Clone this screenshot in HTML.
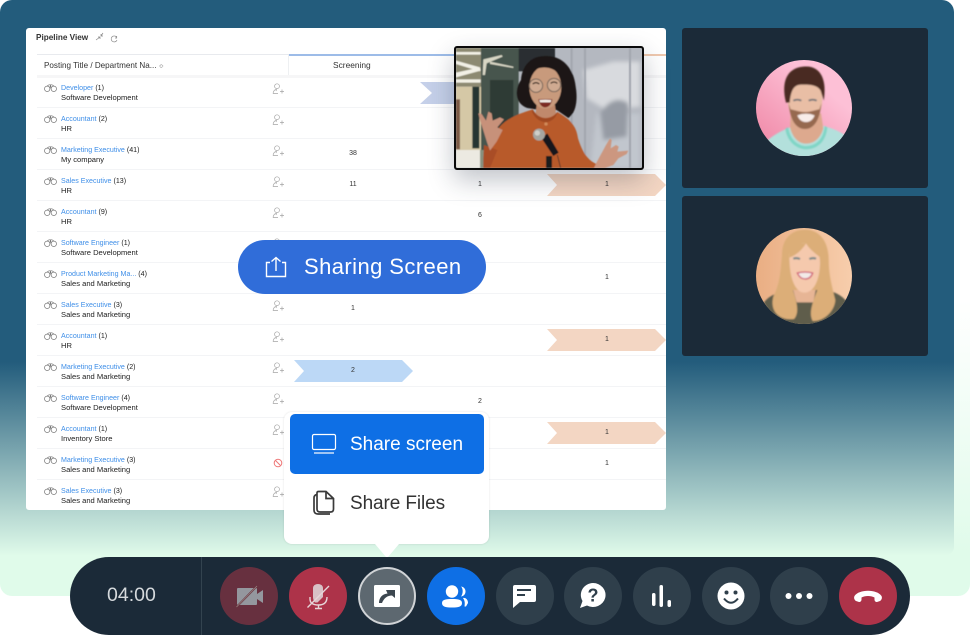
<!DOCTYPE html>
<html><head><meta charset="utf-8"><style>
html,body{margin:0;padding:0;background:#fff}
#p{position:relative;width:970px;height:635px;overflow:hidden;background:#fff;font-family:"Liberation Sans",sans-serif}
#p div{position:absolute}
.mint{left:0;top:0;width:970px;height:596px;border-radius:0 12px 12px 12px;background:linear-gradient(#fff 0,#fff 300px,#e0fbea 555px,#e0fbea 596px)}
.bg{left:0;top:0;width:954px;height:555px;border-radius:12px 12px 8px 0;background:linear-gradient(#235c7c 0,#235c7c 362px,#e0fbea 556px)}
.card{left:26px;top:28px;width:640px;height:482px;background:#fff;border-radius:3px}
.t{font-size:7.6px;line-height:10px;white-space:nowrap;color:#222}
.a{font-size:7.1px}
.l{color:#3f8fe8}
.n{font-size:7px;line-height:10px;color:#333;width:30px;text-align:center}
.ln{left:37px;width:629px;height:1px;background:#f3f4f6}
.pn{left:682px;width:246px;background:#1b2a38;border-radius:3px}
.b{width:58px;height:58px;border-radius:50%;top:567px;background:#2f3f4b}
svg{position:absolute;display:block}
</style></head><body><div id="p">
<div class="mint"></div><div class="bg"></div>
<div class="pn" style="top:28px;height:160px"></div>
<div class="pn" style="top:196px;height:160px"></div>
<div class="card"></div>

<div class="t" style="left:36px;top:33px;font-weight:bold;font-size:8.2px;color:#333">Pipeline View</div>
<svg style="left:95px;top:32px" width="26" height="12" viewBox="0 0 26 12" fill="none" stroke="#888" stroke-width=".7"><path d="M1 8L5 5M3 5H5V7M8 1L6 4M6 2V4H8"/><path d="M21.500 5A3 3 0 1 0 22 8M21.700 4V6H20"/></svg>

<div style="left:37px;top:54px;width:629px;height:1px;background:#e8eaee"></div>
<div style="left:37px;top:75px;width:629px;height:3px;background:#f6f6f7"></div>
<div style="left:288px;top:55px;width:1px;height:20px;background:#eef0f2"></div>
<div style="left:289px;top:54px;width:166px;height:2px;background:#9dbce8"></div>
<div style="left:644px;top:54px;width:22px;height:2px;background:#efc8ae"></div>
<div class="t" style="left:44px;top:60px;font-size:8.1px;line-height:11px;color:#333">Posting Title / Department Na... <span style="color:#999;font-size:6px">≎</span></div>
<div class="t" style="left:333px;top:60px;font-size:8.4px;line-height:11px;color:#333">Screening</div>

<div class="ln" style="top:107px"></div><div class="ln" style="top:138px"></div><div class="ln" style="top:169px"></div><div class="ln" style="top:200px"></div><div class="ln" style="top:231px"></div><div class="ln" style="top:262px"></div><div class="ln" style="top:293px"></div><div class="ln" style="top:324px"></div><div class="ln" style="top:355px"></div><div class="ln" style="top:386px"></div><div class="ln" style="top:417px"></div><div class="ln" style="top:448px"></div><div class="ln" style="top:479px"></div>

<svg width="0" height="0"><defs>
<symbol id="bi" viewBox="0 0 13 8"><g fill="none" stroke="#777" stroke-width=".7"><circle cx="3.200" cy="4.800" r="2.700"/><circle cx="9.800" cy="4.800" r="2.700"/><path d="M3 2L5 .8H8L10 2M5.800 4.500L6.500 1L7.200 4.500"/></g></symbol>
<symbol id="us" viewBox="0 0 12 12"><g fill="none" stroke="#a5a5a5" stroke-width=".7"><circle cx="5" cy="3.200" r="2.400"/><path d="M1 10.500C1.500 7.500 3 6.500 4.500 6.500L4 8M1 10.500H6M8 8.500H12M10 6.500V10.500"/></g></symbol>
</defs></svg>

<svg style="left:44px;top:84px" width="13" height="8"><use href="#bi"/></svg><svg style="left:272px;top:83px" width="12" height="12"><use href="#us"/></svg>
<div class="t a" style="left:61px;top:83px"><span class="l">Developer</span> (1)</div><div class="t" style="left:61px;top:93px">Software Development</div>

<svg style="left:44px;top:115px" width="13" height="8"><use href="#bi"/></svg><svg style="left:272px;top:114px" width="12" height="12"><use href="#us"/></svg>
<div class="t a" style="left:61px;top:114px"><span class="l">Accountant</span> (2)</div><div class="t" style="left:61px;top:124px">HR</div>

<svg style="left:44px;top:146px" width="13" height="8"><use href="#bi"/></svg><svg style="left:272px;top:145px" width="12" height="12"><use href="#us"/></svg>
<div class="t a" style="left:61px;top:145px"><span class="l">Marketing Executive</span> (41)</div><div class="t" style="left:61px;top:155px">My company</div>

<svg style="left:44px;top:177px" width="13" height="8"><use href="#bi"/></svg><svg style="left:272px;top:176px" width="12" height="12"><use href="#us"/></svg>
<div class="t a" style="left:61px;top:176px"><span class="l">Sales Executive</span> (13)</div><div class="t" style="left:61px;top:186px">HR</div>

<svg style="left:44px;top:208px" width="13" height="8"><use href="#bi"/></svg><svg style="left:272px;top:207px" width="12" height="12"><use href="#us"/></svg>
<div class="t a" style="left:61px;top:207px"><span class="l">Accountant</span> (9)</div><div class="t" style="left:61px;top:217px">HR</div>

<svg style="left:44px;top:239px" width="13" height="8"><use href="#bi"/></svg><svg style="left:272px;top:238px" width="12" height="12"><use href="#us"/></svg>
<div class="t a" style="left:61px;top:238px"><span class="l">Software Engineer</span> (1)</div><div class="t" style="left:61px;top:248px">Software Development</div>

<svg style="left:44px;top:270px" width="13" height="8"><use href="#bi"/></svg><svg style="left:272px;top:269px" width="12" height="12"><use href="#us"/></svg>
<div class="t a" style="left:61px;top:269px"><span class="l">Product Marketing Ma...</span> (4)</div><div class="t" style="left:61px;top:279px">Sales and Marketing</div>

<svg style="left:44px;top:301px" width="13" height="8"><use href="#bi"/></svg><svg style="left:272px;top:300px" width="12" height="12"><use href="#us"/></svg>
<div class="t a" style="left:61px;top:300px"><span class="l">Sales Executive</span> (3)</div><div class="t" style="left:61px;top:310px">Sales and Marketing</div>

<svg style="left:44px;top:332px" width="13" height="8"><use href="#bi"/></svg><svg style="left:272px;top:331px" width="12" height="12"><use href="#us"/></svg>
<div class="t a" style="left:61px;top:331px"><span class="l">Accountant</span> (1)</div><div class="t" style="left:61px;top:341px">HR</div>

<svg style="left:44px;top:363px" width="13" height="8"><use href="#bi"/></svg><svg style="left:272px;top:362px" width="12" height="12"><use href="#us"/></svg>
<div class="t a" style="left:61px;top:362px"><span class="l">Marketing Executive</span> (2)</div><div class="t" style="left:61px;top:372px">Sales and Marketing</div>

<svg style="left:44px;top:394px" width="13" height="8"><use href="#bi"/></svg><svg style="left:272px;top:393px" width="12" height="12"><use href="#us"/></svg>
<div class="t a" style="left:61px;top:393px"><span class="l">Software Engineer</span> (4)</div><div class="t" style="left:61px;top:403px">Software Development</div>

<svg style="left:44px;top:425px" width="13" height="8"><use href="#bi"/></svg><svg style="left:272px;top:424px" width="12" height="12"><use href="#us"/></svg>
<div class="t a" style="left:61px;top:424px"><span class="l">Accountant</span> (1)</div><div class="t" style="left:61px;top:434px">Inventory Store</div>

<svg style="left:44px;top:456px" width="13" height="8"><use href="#bi"/></svg>
<svg style="left:273px;top:458px" width="10" height="10" viewBox="0 0 10 10" fill="none" stroke="#e77" stroke-width="1"><circle cx="5" cy="5" r="3.800"/><path d="M2.400 2.400L7.600 7.600"/></svg>
<div class="t a" style="left:61px;top:455px"><span class="l">Marketing Executive</span> (3)</div><div class="t" style="left:61px;top:465px">Sales and Marketing</div>

<svg style="left:44px;top:487px" width="13" height="8"><use href="#bi"/></svg><svg style="left:272px;top:486px" width="12" height="12"><use href="#us"/></svg>
<div class="t a" style="left:61px;top:486px"><span class="l">Sales Executive</span> (3)</div><div class="t" style="left:61px;top:496px">Sales and Marketing</div>

<svg style="left:420px;top:82px" width="40" height="22"><path d="M0 0H40V22H0L12 11z" fill="#c5d0e9"/></svg>
<svg style="left:547px;top:174px" width="119" height="22"><path d="M0 0H108L119 11L108 22H0L10 11z" fill="#f3d6c3"/></svg>
<svg style="left:547px;top:329px" width="119" height="22"><path d="M0 0H108L119 11L108 22H0L10 11z" fill="#f3d6c3"/></svg>
<svg style="left:547px;top:422px" width="119" height="22"><path d="M0 0H108L119 11L108 22H0L10 11z" fill="#f3d6c3"/></svg>
<svg style="left:294px;top:360px" width="119" height="22"><path d="M0 0H108L119 11L108 22H0L10 11z" fill="#bcd8f6"/></svg>

<div class="n" style="left:338px;top:149px">38</div>
<div class="n" style="left:338px;top:180px">11</div>
<div class="n" style="left:465px;top:180px">1</div>
<div class="n" style="left:592px;top:180px">1</div>
<div class="n" style="left:465px;top:211px">6</div>
<div class="n" style="left:592px;top:273px">1</div>
<div class="n" style="left:338px;top:304px">1</div>
<div class="n" style="left:592px;top:335px">1</div>
<div class="n" style="left:338px;top:366px">2</div>
<div class="n" style="left:465px;top:397px">2</div>
<div class="n" style="left:592px;top:428px">1</div>
<div class="n" style="left:592px;top:459px">1</div>

<!-- video -->
<div style="left:454px;top:46px;width:186px;height:120px;border:2px solid #0a0a0a;border-radius:3px;overflow:hidden;box-shadow:0 10px 26px rgba(30,40,60,.28);background:#999"></div>
<svg style="left:456px;top:48px;border-radius:2px" width="186" height="120" viewBox="48 54 558 360">
<defs><filter id="sf"><feGaussianBlur stdDeviation="1.600"/></filter><filter id="sf2"><feGaussianBlur stdDeviation="6"/></filter><filter id="sf3"><feGaussianBlur stdDeviation="2.500"/></filter><clipPath id="cm"><circle cx="192" cy="174" r="144"/></clipPath><clipPath id="cw"><circle cx="192" cy="183" r="144"/></clipPath>
<linearGradient id="gm" x1="1" y1="0" x2="0" y2="1"><stop offset=".35" stop-color="#fdc0d6"/><stop offset=".85" stop-color="#f08aa8"/></linearGradient>
<linearGradient id="gw" x1="0" y1="0" x2="1" y2="0"><stop offset=".1" stop-color="#e9ad82"/><stop offset=".9" stop-color="#f8cfae"/></linearGradient></defs>
<rect x="48" y="54" width="558" height="360" fill="#b4b8c0"/>
<g filter="url(#sf2)"><path d="M430 120L520 95 600 95V230L500 240 440 205z" fill="#d8dade"/><path d="M470 250H600V414H450z" fill="#c1c6cd"/><path d="M480 250Q520 190 565 220L560 320 490 330z" fill="#969ba4"/></g>
<g filter="url(#sf)">
<path d="M395 54V414M435 54V414M570 54V414" stroke="#a2a6ae" stroke-width="6" fill="none"/>
<rect x="235" y="54" width="110" height="70" fill="#2b2d31"/>
<rect x="118" y="54" width="118" height="360" fill="#47544d"/>
<rect x="150" y="150" width="70" height="200" fill="#2e3b36"/>
<rect x="48" y="54" width="75" height="116" fill="#8d8a72"/>
<path d="M48 66H122V74H48zM48 92L120 112V124L48 102zM48 128L120 112 122 122 48 142zM48 148H122V158H48z" fill="#f2f0e6"/>
<path d="M130 88L185 75 188 80 140 100 135 135 128 135zM150 95L220 110 220 114 150 102z" fill="#d8d6c4"/>
<rect x="48" y="170" width="75" height="190" fill="#d5c8a6"/>
<rect x="48" y="208" width="12" height="150" fill="#7c5a45"/>
<rect x="97" y="170" width="21" height="185" fill="#273631"/>
<rect x="48" y="360" width="75" height="54" fill="#eceae2"/>
<rect x="120" y="360" width="15" height="54" fill="#87917f"/>
<path d="M320 78C270 76 246 110 243 150C222 180 226 222 262 234L300 240H350L385 264C408 250 414 210 407 170C402 115 367 78 320 78z" fill="#1c1818"/>
<path d="M290 225H345L352 285H282z" fill="#c0896c"/>
<ellipse cx="316" cy="172" rx="48" ry="64" fill="#c89a7c"/>
<path d="M270 130C290 105 345 105 362 140L372 120 330 95 280 105z" fill="#1c1818"/>
<circle cx="288" cy="167" r="20" fill="#d6b9a5" fill-opacity=".5" stroke="#77665a" stroke-width="3"/>
<circle cx="342" cy="165" r="20" fill="#d6b9a5" fill-opacity=".5" stroke="#77665a" stroke-width="3"/>
<path d="M278 162Q288 154 298 162M332 160Q342 152 352 160" stroke="#3a2a22" stroke-width="4" fill="none"/>
<path d="M295 208Q316 206 337 208Q332 232 314 232Q300 230 295 208z" fill="#7c2a20"/>
<path d="M298 210Q316 208 334 210L332 217H300z" fill="#f3efe9"/>
<path d="M130 414C132 370 150 335 172 300C195 265 240 250 278 238C295 270 330 272 352 246C390 268 408 285 414 325C425 360 440 390 470 402L462 414z" fill="#b85a2c"/>
<path d="M278 238C296 272 335 272 352 246L350 254C335 285 295 285 276 246z" fill="#a04a22"/>
<path d="M130 385L132 345 172 360 150 414H130z" fill="#a94e26"/>
<circle cx="318" cy="282" r="5" fill="#d08a58"/>
<path d="M142 340L120 270 115 250 125 252 138 272 145 245 155 250 158 272 180 262 192 268 172 292 188 300 170 335 150 362z" fill="#c7917a"/>
<path d="M462 414C470 395 485 370 498 345L510 325 515 330 512 355 528 345 536 350 532 365 565 362 560 372 535 385 520 405 495 414z" fill="#cc9780"/>
<path d="M352 375L362 414" stroke="#2a2a2a" stroke-width="2"/>
<rect x="318" y="378" width="18" height="36" fill="#1a1a1a"/>
<path d="M305 325L340 378 356 368 322 310z" fill="#15171a"/>
<circle cx="297" cy="314" r="18" fill="#a5a5a0"/><circle cx="292" cy="309" r="8" fill="#cfcfca"/>
</g>
</svg>

<!-- man -->
<svg style="left:740px;top:50px" width="130" height="110" viewBox="0 0 390 330"><g clip-path="url(#cm)"><rect width="390" height="330" fill="url(#gm)"/><g filter="url(#sf3)">
<path d="M72 280C105 250 130 240 150 232L250 228C280 235 300 245 325 262V330H72z" fill="#b3e0dc"/>
<path d="M145 232C150 272 178 288 198 288C228 288 250 268 254 228L262 232C258 278 228 298 198 298C168 298 140 272 136 236z" fill="#80d6c6"/>
<path d="M152 190H243L250 235C240 272 215 281 198 281C175 281 157 262 150 232z" fill="#dda98e"/>
<ellipse cx="195" cy="148" rx="52" ry="76" fill="#e9bea5"/>
<path d="M146 160C150 208 167 237 195 237C223 237 240 208 244 160L238 178C224 180 212 186 195 186C178 186 166 180 152 178z" fill="#96694f"/>
<path d="M172 196Q198 186 224 196Q216 216 198 216Q180 216 172 196z" fill="#f8ece9"/>
<path d="M138 158C122 92 143 54 190 50C242 44 262 90 251 152L242 122C232 105 210 104 190 104C170 104 154 106 149 158z" fill="#4a2a21"/>
<path d="M160 152Q172 146 184 152M206 152Q218 146 230 152" stroke="#5f6a72" stroke-width="5" fill="none"/>
</g></g></svg>

<!-- woman -->
<svg style="left:740px;top:215px" width="130" height="120" viewBox="0 0 390 360"><g clip-path="url(#cw)"><rect width="390" height="360" fill="url(#gw)"/><g filter="url(#sf3)">
<path d="M72 262C90 238 120 230 150 226L250 224C280 228 305 240 320 260L280 335H110z" fill="#5f5d4b"/>
<path d="M155 210L230 210 220 262H170z" fill="#e7b595"/>
<path d="M126 120C126 66 160 44 195 44C239 44 266 80 266 135C266 180 276 215 286 255C284 290 250 320 218 318C205 295 218 262 232 225L158 225C172 262 178 295 162 312C122 318 88 292 100 245C120 205 122 165 126 120z" fill="#dcae78"/>
<path d="M148 122C148 92 175 82 195 85C226 86 242 110 240 150C237 205 217 233 193 233C170 233 148 200 148 122z" fill="#f5c9ad"/>
<path d="M148 128C165 122 185 107 198 85L150 82zM198 85C210 105 230 118 242 128L236 82z" fill="#dcae78"/>
<path d="M172 174Q195 168 218 174Q212 192 195 192Q180 192 172 174z" fill="#f2ebe8" stroke="#cf5a72" stroke-width="4"/>
<path d="M160 131Q170 127 180 132M208 132Q218 127 228 131" stroke="#6f8487" stroke-width="6" fill="none"/>
</g></g></svg>

<!-- pill -->
<div style="left:238px;top:240px;width:248px;height:54px;border-radius:27px;background:#306dd9"></div>
<svg style="left:262px;top:254px" width="28" height="26" viewBox="0 0 28 26" fill="none" stroke="#fff" stroke-width="1.400"><path d="M8 8.500H4.500V22.500H23.500V8.500H20M14 17V3.500M9.500 7.500L14 3.500L18.500 7.500"/></svg>
<div class="t" style="left:304px;top:253px;font-size:22px;line-height:28px;color:#fff;letter-spacing:.42px">Sharing Screen</div>

<!-- popup -->
<div style="left:284px;top:412px;width:205px;height:132px;background:#fff;border-radius:8px;box-shadow:0 0 2px rgba(0,0,0,.12)"></div>
<div style="left:290px;top:414px;width:194px;height:60px;background:#0e6fe5;border-radius:5px"></div>
<svg style="left:310px;top:432px" width="28" height="24" viewBox="0 0 28 24" fill="none" stroke="#fff" stroke-width="1.200"><rect x="2.500" y="2.500" width="23" height="15" rx="1.500"/><path d="M4 21H24" stroke="#cfe2fa" stroke-width="1.500"/></svg>
<div class="t" style="left:350px;top:431px;font-size:19px;line-height:28px;color:#fff">Share screen</div>
<svg style="left:311px;top:489px" width="26" height="28" viewBox="0 0 26 28" fill="none" stroke="#3a3a3a" stroke-width="1.700"><path d="M7.500 2.500H15L22.500 9.500V20Q22.500 23 19.500 23H9Q6 23 6 20V4Q6 2.500 7.500 2.500zM15 3V9.500H22"/><path d="M6 5.500Q3 6 3 9V21Q3 25 7 25H19"/></svg>
<div class="t" style="left:350px;top:490px;font-size:19px;line-height:28px;color:#333;letter-spacing:-.1px">Share Files</div>
<svg style="left:375px;top:543px" width="24" height="15"><path d="M0 1H24L13 14H11z" fill="#fff"/></svg>

<!-- bar -->
<div style="left:70px;top:557px;width:840px;height:78px;border-radius:39px;background:#1b2a38"></div>
<div style="left:201px;top:557px;width:1px;height:78px;background:#33434f"></div>
<div class="t" style="left:107px;top:582px;font-size:19.5px;line-height:26px;color:#d5d9dc">04:00</div>

<div class="b" style="left:220px;background:#67303f"></div>
<svg style="left:235px;top:583px" width="30" height="26" viewBox="0 0 30 26"><rect x="2" y="5" width="20" height="17" rx="1" fill="#94979e"/><path d="M22 11L28 7V20L22 16z" fill="#94979e"/><path d="M1.500 24L22 3" stroke="#67303f" stroke-width="1.800"/><path d="M1.500 24L22 3" stroke="#9a8a84" stroke-width=".7"/></svg>

<div class="b" style="left:289px;background:#ad3349"></div>
<svg style="left:306px;top:582px" width="26" height="30" viewBox="0 0 26 30" fill="none" stroke="#e6d5d8" stroke-width="1.400"><path d="M7 6A5 4 0 0 1 17 6V15L11.500 20.500H9Q7 18 7 15z" fill="#d8c0c5" stroke="none"/><path d="M4 15V17Q4 23 12.500 23Q21 23 21 15M12.500 23V26M9 26.500H16M1.500 25.500L23 4"/></svg>

<div class="b" style="left:358px;background:#5d6870;width:54px;height:54px;border:2px solid #d0d3d6"></div>
<svg style="left:373px;top:584px" width="28" height="24" viewBox="0 0 28 24"><rect x="1" y="1" width="26" height="22" rx="1.500" fill="#fff"/><path d="M6 19C6 13.500 9.500 10 14.500 9.500L13 6H22V14L19 11.500C14.500 11.500 11 14 9 19z" fill="#3d4750"/></svg>

<div class="b" style="left:427px;background:#0e6fe5"></div>
<svg style="left:440px;top:582px" width="30" height="28" viewBox="0 0 30 28" fill="#fff"><circle cx="12" cy="9.500" r="6.200"/><path d="M2 21C2 17.500 6 17 12 17C18 17 22 17.500 22 21C22 25 18 25.500 12 25.500C6 25.500 2 25 2 21z"/><path d="M21 4.500C24 5 25.500 7 25.500 9.500C25.500 12 24 14 21 14.500C23 12 23.500 7 21 4.500zM23 16C26 15.500 28 18 28 21L26 24.500H24.500C25 21 25 19 23 16z"/></svg>

<div class="b" style="left:496px"></div>
<svg style="left:512px;top:584px" width="25" height="25" viewBox="0 0 25 25"><path d="M3 1H22Q24 1 24 3V16Q24 18 22 18H8L1 24V3Q1 1 3 1z" fill="#fff"/><path d="M5 6H19M5 11H13" stroke="#2f3f4b" stroke-width="2"/></svg>

<div class="b" style="left:564px"></div>
<svg style="left:579px;top:582px" width="28" height="28" viewBox="0 0 28 28"><path d="M14 1A12.500 12 0 1 1 8 23.500L1 26L3.500 19A12.500 12 0 0 1 14 1z" fill="#fff"/><text x="14" y="19.500" text-anchor="middle" font-family="Liberation Sans,sans-serif" font-weight="bold" font-size="18" fill="#2f3f4b">?</text></svg>

<div class="b" style="left:633px"></div>
<svg style="left:650px;top:585px" width="24" height="22" viewBox="0 0 24 22" fill="#fff"><rect x="2" y="8" width="3.500" height="13" rx="1.700"/><rect x="9.500" y="0" width="3.500" height="22" rx="1.700"/><rect x="17.500" y="15" width="3.500" height="7" rx="1.700"/></svg>

<div class="b" style="left:702px"></div>
<svg style="left:717px;top:582px" width="28" height="28" viewBox="0 0 28 28"><circle cx="14" cy="14" r="13.500" fill="#fff"/><circle cx="9.500" cy="10.500" r="2" fill="#2f3f4b"/><circle cx="18.500" cy="10.500" r="2" fill="#2f3f4b"/><path d="M7 16.500Q14 25 21 16.500" fill="none" stroke="#2f3f4b" stroke-width="2"/></svg>

<div class="b" style="left:770px"></div>
<svg style="left:784px;top:590px" width="30" height="12" viewBox="0 0 30 12" fill="#fff"><circle cx="4.500" cy="6" r="3"/><circle cx="15" cy="6" r="3"/><circle cx="25.500" cy="6" r="3"/></svg>

<div class="b" style="left:839px;background:#ad3349"></div>
<svg style="left:853px;top:587px" width="30" height="18" viewBox="0 0 30 18"><path d="M1.500 9C6 2 24 2 28.500 9C29.500 11 28.500 13 27 14L24 15C22.500 15 21.500 14 21.500 12.500V10.500C18 8.500 12 8.500 8.500 10.500V12.500C8.500 14 7.500 15 6 15L3 14C1.500 13 .5 11 1.500 9z" fill="#fff"/></svg>
</div></body></html>
